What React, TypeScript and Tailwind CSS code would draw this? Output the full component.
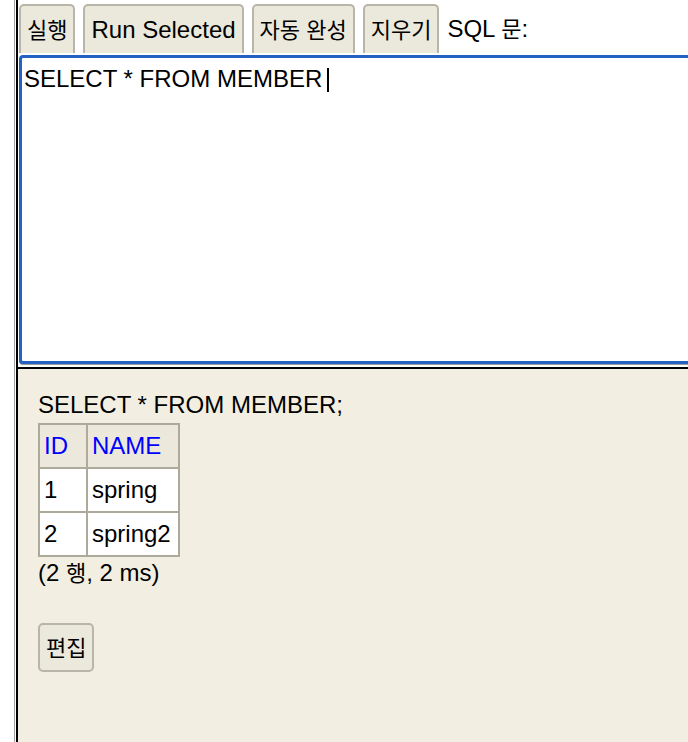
const font = { fontFamily: '"Liberation Sans", "Noto Sans CJK KR", sans-serif' }

// Korean glyphs in the reference are narrower than Noto's full em
const K = ({ children }: { children: string }) => <span className="text-[22px]">{children}</span>

const tools = [<K>실행</K>, 'Run Selected', <K>자동 완성</K>, <K>지우기</K>]

const rows = [
  { id: '1', name: 'spring' },
  { id: '2', name: 'spring2' },
]

export default function App() {
  return (
    <div className="flex h-[742px] w-[688px] overflow-hidden bg-white text-[24px] text-black" style={font}>
      {/* frame edge */}
      <div className="w-[14px] shrink-0 bg-white" />
      <div className="w-px shrink-0 bg-[#a0a0a0]" />
      <div className="w-px shrink-0 bg-white" />
      <div className="w-[2px] shrink-0 bg-black" />

      <div className="flex min-w-0 flex-1 flex-col">
        {/* query frame */}
        <div className="flex h-[365px] shrink-0 flex-col bg-white pl-[1px]">
          <div className="flex h-[55px] items-start gap-[8px] pt-[4px]">
            {tools.map((t, i) => (
              <button
                key={i}
                className="h-[49px] rounded-t-[5px] border-2 border-b-0 border-[#b9b5a8] bg-[#ebe8dc] px-[6px] leading-none"
              >
                {t}
              </button>
            ))}
            <span className="pt-[13px] leading-none">
              SQL <K>문</K>:
            </span>
          </div>
          <div className="-mr-4 h-[309px] rounded-l-[4px] border-[3px] border-r-0 border-[#2361c3] bg-white px-[2px] pt-[7px] leading-[27px] shadow-[0_1px_0_#9a9a9a]">
            SELECT * FROM MEMBER <span className="ml-[-2px] inline-block h-[24px] w-[2px] translate-y-[3px] bg-black align-top" />
          </div>
        </div>
        <div className="h-[2px] shrink-0 bg-white" />
        <div className="h-[2px] shrink-0 bg-black" />

        {/* result frame */}
        <div className="flex-1 bg-[#f2efe2] pl-[20px] pt-[22px]">
          <div className="leading-[27px]">SELECT * FROM MEMBER;</div>
          <table className="mt-[5px] border-collapse">
            <thead>
              <tr className="bg-[#ece9dc]">
                <th className="h-[44px] w-[48px] border-2 border-[#adaa9c] px-[4px] text-left font-normal text-[#0000ff]">ID</th>
                <th className="h-[44px] border-2 border-[#adaa9c] pl-[4px] pr-[7px] text-left font-normal text-[#0000ff]">NAME</th>
              </tr>
            </thead>
            <tbody>
              {rows.map((r) => (
                <tr key={r.id} className="bg-white">
                  <td className="h-[44px] border-2 border-[#adaa9c] px-[4px]">{r.id}</td>
                  <td className="h-[44px] border-2 border-[#adaa9c] pl-[4px] pr-[7px]">{r.name}</td>
                </tr>
              ))}
            </tbody>
          </table>
          <div className="mt-[2px] leading-[27px]">
            (2 <K>행</K>, 2 ms)
          </div>
          <button className="mt-[36px] h-[49px] rounded-[5px] border-2 border-[#b9b5a8] bg-[#ebe8dc] px-[6px] leading-none">
            <K>편집</K>
          </button>
        </div>
      </div>
    </div>
  )
}
